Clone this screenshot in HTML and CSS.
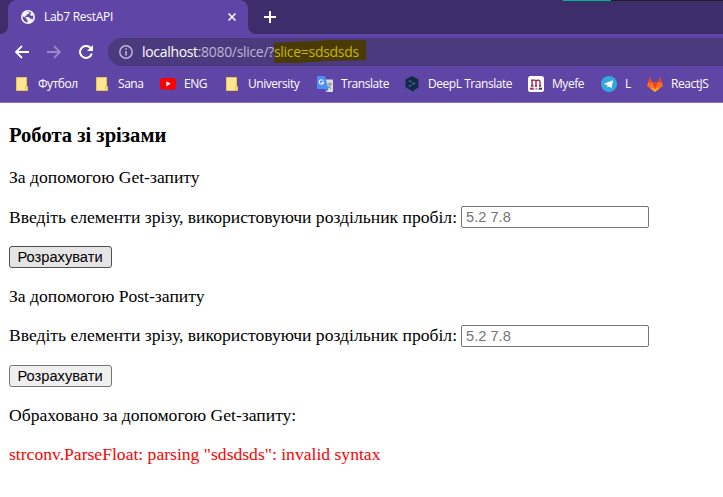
FILE: index.html
```html
<!DOCTYPE html>
<html lang="uk">
<head>
<meta charset="utf-8">
<title>Lab7 RestAPI</title>
<link rel="stylesheet" href="styles.css">
</head>
<body>
<header class="browser">
  <div class="tabstrip">
    <div class="edge"></div>
    <div class="tab">
      <svg class="globe" width="14" height="14" viewBox="0 0 14 14"><circle cx="7" cy="7" r="7" fill="#f5f3fa"/><path d="M1.6 6.2 5.3 8v1.2l1.2 1v2.2C3.6 12.1 1.4 9.6 1.6 6.2ZM5 2.1l3.4-.5v1.3L7.2 4.2H5.7v1.6H4.4L4 7h3.8l1.2 1.4h1.5l.5 1.6c1.1-1.2 1.6-2.8 1.2-4.4L10.3 6 9 5l1.1-2.8C8.6 1.3 6.500 1.200 5 2.100Z" fill="#5f45a5"/></svg>
      <span class="title">Lab7 RestAPI</span>
      <svg class="close" width="8" height="8" viewBox="0 0 8 8"><path d="M.5.5l7 7m0-7l-7 7" stroke="#fff" stroke-width="1.5"/></svg>
    </div>
    <div class="rest">
      <svg width="12" height="12" viewBox="0 0 12 12"><path d="M6 0v12M0 6h12" stroke="#fff" stroke-width="2"/></svg>
    </div>
    <div class="strip-line"></div>
  </div>
  <div class="toolbar">
    <svg class="nav" width="14" height="14" viewBox="0 0 14 14"><path d="M14 7H1.500M7 1L1 7l6 6" fill="none" stroke="#fff" stroke-width="1.800"/></svg>
    <svg class="nav" width="14" height="14" viewBox="0 0 14 14"><path d="M0 7h12.500M7 1l6 6-6 6" fill="none" stroke="#9a87cb" stroke-width="1.800"/></svg>
    <svg class="nav" width="14" height="14" viewBox="0 0 14 14"><path d="M11.800 3.300A6 6 0 1 0 12.800 8.500" fill="none" stroke="#fff" stroke-width="2"/><path d="M14 0v6H8Z" fill="#fff"/></svg>
    <div class="omnibox">
      <svg width="14" height="14" viewBox="0 0 14 14"><circle cx="7" cy="7" r="6.200" fill="none" stroke="#bdb4d3" stroke-width="1.500"/><path d="M7 6v4.500M7 3.300v1.500" stroke="#bdb4d3" stroke-width="1.600"/></svg>
      <span class="url"><span class="host">localhost</span><span class="path">:8080/slice/?</span></span><span class="mark"><span>slice=sdsdsds</span></span>
    </div>
  </div>
  <nav class="bookmarks">
    <div class="bm"><svg class="folder" width="12" height="14" viewBox="0 0 12 14"><path d="M.5.5h10v9h1v4H.5Z" fill="#ffe692" stroke="#e8c34f"/><path d="M9.500 13V9.500h1" fill="none" stroke="#e8c34f"/></svg><span>Футбол</span></div>
    <div class="bm"><svg class="folder" width="12" height="14" viewBox="0 0 12 14"><path d="M.5.5h10v9h1v4H.5Z" fill="#ffe692" stroke="#e8c34f"/><path d="M9.500 13V9.500h1" fill="none" stroke="#e8c34f"/></svg><span>Sana</span></div>
    <div class="bm"><svg width="16" height="12" viewBox="0 0 16 12"><rect width="16" height="11.500" rx="2.500" fill="red"/><path d="M6.300 3.300v5l4.400-2.500Z" fill="#fff"/></svg><span>ENG</span></div>
    <div class="bm"><svg class="folder" width="12" height="14" viewBox="0 0 12 14"><path d="M.5.5h10v9h1v4H.5Z" fill="#ffe692" stroke="#e8c34f"/><path d="M9.500 13V9.500h1" fill="none" stroke="#e8c34f"/></svg><span>University</span></div>
    <div class="bm"><svg width="16" height="16" viewBox="0 0 16 16"><path d="M6 3.500h9q1 0 1 1V15q0 1-1 1H9Z" fill="#dedede"/><path d="M1 0h7l3.500 13H1q-1 0-1-1V1q0-1 1-1Z" fill="#4c8df6"/><path d="M8.500 13H11.500L9 16Z" fill="#3567d6"/><path d="M6.300 4.900A2.200 2.200 0 1 0 6.500 6.500H4.500" fill="none" stroke="#fff" stroke-width="1.100"/><path d="M10.500 8h4.500M12.500 6.500v1.500M14 8q-.8 2.500-3 4M11.500 9.500l2.500 3.500" fill="none" stroke="#727b80" stroke-width=".9"/></svg><span>Translate</span></div>
    <div class="bm deepl"><svg width="14" height="16" viewBox="0 0 14 16"><path d="M7 0l6.500 3.500v8L9 14v2l-3-1.700-5.500-3v-7.800Z" fill="#0f2b46"/><path d="M4.500 4.800l4.800 2.700-4.800 2.700" fill="none" stroke="#4c5087"/><circle cx="4.600" cy="4.900" r=".9" fill="#5c5b9c"/><circle cx="9.400" cy="7.500" r=".9" fill="#5c5b9c"/><circle cx="4.600" cy="10.200" r=".9" fill="#5c5b9c"/></svg><span>DeepL Translate</span></div>
    <div class="bm"><svg width="16" height="16" viewBox="0 0 16 16"><rect width="16" height="16" rx="2.500" fill="#fff"/><path d="M4 10V4.500M3 4.200h2.500q2.500-.5 2.500 1.300V10M8 5.200q.6-1.100 2.200-1.100T12 5.500V10M3 10h2.500m1.500 0h2m2 0h2" fill="none" stroke="#9b1740" stroke-width="1.300"/><path d="M2 12.700h3" stroke="#d12346" stroke-width="2"/><path d="M5 12.700h6" stroke="#9990bb" stroke-width="2" stroke-dasharray="1 .5"/><path d="M11 12.700h3" stroke="#35317e" stroke-width="2"/></svg><span>Myefe</span></div>
    <div class="bm"><svg width="16" height="16" viewBox="0 0 16 16"><circle cx="8" cy="8" r="8" fill="#32a8df"/><path d="M3 7.700l9-3.500-1.500 8-2.600-1.900-1.200 1.200-.4-2.200Z" fill="#fff"/><path d="M6.200 9.200l4-3.300-3.100 3.700-.4 1.900Z" fill="#c2ddeb"/></svg><span>L</span></div>
    <div class="bm"><svg width="16" height="15" viewBox="0 0 16 15"><path d="M0 9L2.800 0l2.500 5.500h5.400L13.200 0 16 9l-8 6Z" fill="#fc6d26"/><path d="M2.800 0l2.500 5.500H1.100ZM13.200 0l-2.500 5.500h4.200ZM5.300 5.500h5.400L8 12Z" fill="#e24329"/><path d="M3.500 11.500L5 10.300l3 2 3-2 1.500 1.200L8 15Z" fill="#fca326"/></svg><span>ReactJS</span></div>
  </nav>
</header>
<main>
  <h3>Робота зі зрізами</h3>
  <p class="first">За допомогою Get-запиту</p>
  <div class="row"><label class="first" for="get">Введіть елементи зрізу, використовуючи роздільник пробіл:</label><input id="get" placeholder="5.2 7.8"></div>
  <div class="row"><button class="active">Розрахувати</button></div>
  <p>За допомогою Post-запиту</p>
  <div class="row"><label for="post">Введіть елементи зрізу, використовуючи роздільник пробіл:</label><input id="post" placeholder="5.2 7.8"></div>
  <div class="row"><button>Розрахувати</button></div>
  <p>Обраховано за допомогою Get-запиту:</p>
  <p class="error">strconv.ParseFloat: parsing "sdsdsds": invalid syntax</p>
</main>
</body>
</html>
```
FILE: styles.css
```css
* { box-sizing: border-box; }
body { margin: 0; width: 723px; height: 497px; overflow: hidden; background: #fff; font-family: "Liberation Serif", serif; }
svg { display: block; flex: none; }
.browser { height: 103px; background: #5f45a5; border-bottom: 1px solid #8a76bf; font: 12px "Open Sans", "Noto Sans", sans-serif; color: #fff; white-space: nowrap; }
.tabstrip { position: relative; display: flex; height: 34px; }
.edge { width: 8px; background: #3d2d6a; border-bottom-right-radius: 8px; }
.tab { display: flex; align-items: center; width: 240px; padding: 0 12px 0 13px; position: relative; }
.tab::before, .tab::after { content: ""; position: absolute; top: 0; width: 8px; height: 8px; }
.tab::before { left: 0; background: radial-gradient(circle at 8px 8px, transparent 7.500px, #3d2d6a 8px); }
.tab::after { right: 0; background: radial-gradient(circle at 0 8px, transparent 7.500px, #3d2d6a 8px); }
.title { margin: -1px 0 0 9px; letter-spacing: -.3px; }
.close { margin-left: auto; }
.rest { flex: 1; display: flex; align-items: center; padding-left: 16px; background: #3d2d6a; border-bottom-left-radius: 8px; }
.strip-line { position: absolute; top: 0; left: 563px; right: 0; height: 1px; background: linear-gradient(90deg, #00b493 48px, #202020 48px); }
.toolbar { display: flex; align-items: center; height: 36px; padding-left: 15px; }
.nav { margin-right: 18px; }
.omnibox { flex: 1; display: flex; align-items: center; height: 28px; margin-left: -3px; padding-left: 11px; background: #4c3a7e; border-radius: 14px 0 0 14px; font-size: 14px; }
.url { width: 132px; margin: -1px 0 0 9px; letter-spacing: -.32px; }
.path { color: #bdb4d3; }
.mark { display: flex; align-items: center; width: 92px; height: 23px; margin-top: -1px; background: #4a3a05; color: #c3b800; clip-path: polygon(0 12%, 40% 5%, 60% 0, 100% 0, 100% 87%, 60% 91%, 25% 100%, 0 100%); letter-spacing: -.3px; }
.mark span { margin-top: -1px; }
.bookmarks { display: grid; grid-template-columns: 80px 64px 66px 91px 88px 123px 73px 46px 1fr; height: 28px; padding-left: 16px; align-items: center; letter-spacing: -.45px; }
.bm { display: flex; align-items: center; gap: 8px; }
.bm span { margin-top: -1px; }
.deepl { gap: 9px; }
.folder { margin-right: 2px; }
main { display: flex; flex-direction: column; gap: 17.600px; padding: 21px 9px; font-size: 17.600px; color: #000; white-space: nowrap; }
h3, p { margin: 0; height: 22px; line-height: 22px; }
h3 { font-size: 20.600px; margin-bottom: 3px; }
.first { line-height: 20px; }
.row { display: flex; align-items: center; height: 22px; }
label { flex: none; width: 452px; }
input { width: 188px; height: 22px; border: 1px solid #767676; border-radius: 2px; padding: 0 4px; font: 14.670px "Liberation Sans", sans-serif; background: #fff; }
input::placeholder { color: #757575; opacity: 1; }
button { width: 103px; height: 22px; padding: 1px 1px 0 0; border: 1px solid #767676; border-radius: 3px; background: #efefef; color: #000; font: 14.670px/19px "Liberation Sans", sans-serif; }
.active { background: #e5e5e5; border-color: #4f4f4f; }
.error { color: #f00; line-height: 20px; }
```
